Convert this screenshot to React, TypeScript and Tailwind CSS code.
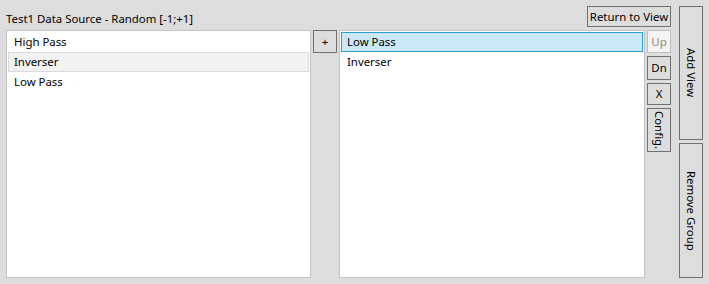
import React from "react";

const font = { fontFamily: '"Noto Sans", "Open Sans", sans-serif' };

function Btn({ children, className = "" }: { children: React.ReactNode; className?: string }) {
  return (
    <div
      className={
        "flex items-center justify-center border border-[#707070] bg-[#dddddd] text-[#000000] leading-none whitespace-nowrap " +
        className
      }
    >
      {children}
    </div>
  );
}

export default function App() {
  return (
    <div
      className="w-[709px] h-[284px] bg-[#dddddd] flex pl-[6px] pt-[6px] pr-[6px] pb-[6px] gap-[8px] text-[11.4px] text-[#000000]"
      style={font}
    >
      <div className="flex flex-col flex-1">
        <div className="flex items-end justify-between h-[21px]">
          <div className="pb-[3px] leading-none">Test1 Data Source - Random [-1;+1]</div>
          <Btn className="w-[84px] h-[21px]">Return to View</Btn>
        </div>
        <div className="flex mt-[3px] flex-1 gap-[2px]">
          <div className="w-[305px] border border-[#c4c4c4] bg-white p-[1px] flex flex-col">
            <div className="h-[20px] flex items-center pl-[5px] border border-transparent">High Pass</div>
            <div className="h-[20px] flex items-center pl-[5px] border border-[#dadada] bg-[#f2f2f2]">Inverser</div>
            <div className="h-[20px] flex items-center pl-[5px] border border-transparent">Low Pass</div>
          </div>
          <div className="w-[24px] flex flex-col">
            <Btn className="h-[23px]">+</Btn>
          </div>
          <div className="w-[306px] border border-[#c4c4c4] bg-white p-[1px] flex flex-col">
            <div className="h-[20px] flex items-center pl-[5px] border border-[#26a0da] bg-[#cbe8f6]">Low Pass</div>
            <div className="h-[20px] flex items-center pl-[5px] border border-transparent">Inverser</div>
          </div>
          <div className="w-[24px] flex flex-col gap-[3px]">
            <div className="h-[23px] flex items-center justify-center border border-[#bfbfbf] bg-[#f4f4f4] text-[#8a8a8a]">Up</div>
            <Btn className="h-[24px]">Dn</Btn>
            <Btn className="h-[22px]">X</Btn>
            <Btn className="h-[44px]">
              <span className="[writing-mode:vertical-rl]">Config.</span>
            </Btn>
          </div>
        </div>
      </div>
      <div className="w-[24px] flex flex-col gap-[3px]">
        <Btn className="h-[134px]">
          <span className="[writing-mode:vertical-rl]">Add View</span>
        </Btn>
        <Btn className="flex-1">
          <span className="[writing-mode:vertical-rl]">Remove Group</span>
        </Btn>
      </div>
    </div>
  );
}
